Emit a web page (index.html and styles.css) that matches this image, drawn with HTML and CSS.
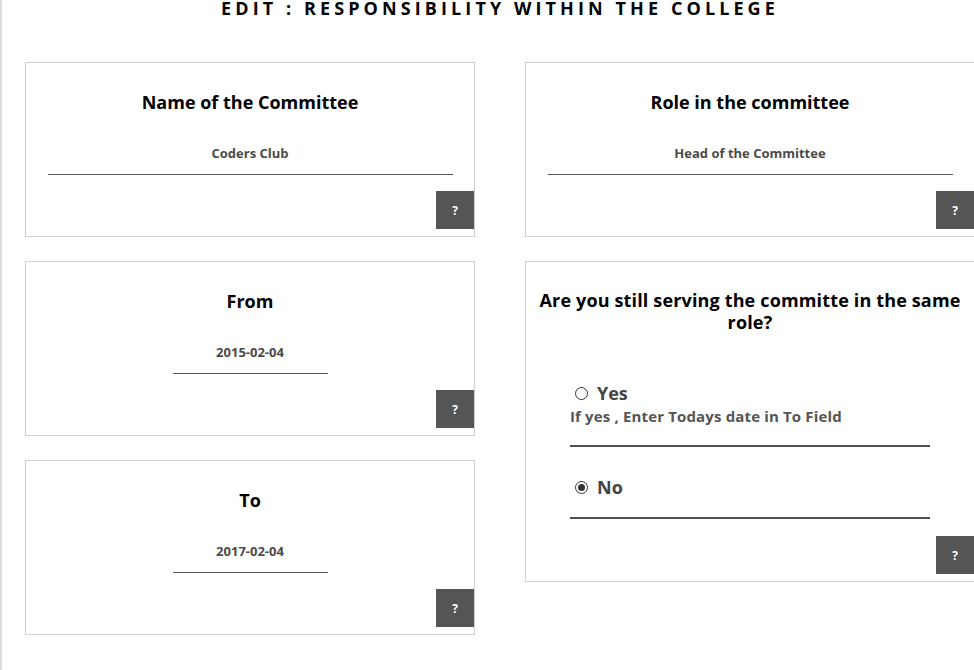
FILE: index.html
```html
<!DOCTYPE html>
<html lang="en">
<head>
<meta charset="utf-8">
<title>Edit : Responsibility within the college</title>
<link rel="stylesheet" href="styles.css">
</head>
<body>
<div class="page">
  <h1 class="page-title">EDIT : RESPONSIBILITY WITHIN THE COLLEGE</h1>
  <div class="grid">
    <div class="col">
      <div class="card">
        <div class="card-label">Name of the Committee</div>
        <div class="field field-wide">Coders Club</div>
        <button class="help">?</button>
      </div>
      <div class="card">
        <div class="card-label">From</div>
        <div class="field field-short">2015-02-04</div>
        <button class="help">?</button>
      </div>
      <div class="card">
        <div class="card-label">To</div>
        <div class="field field-short">2017-02-04</div>
        <button class="help">?</button>
      </div>
    </div>
    <div class="col">
      <div class="card">
        <div class="card-label">Role in the committee</div>
        <div class="field field-wide">Head of the Committee</div>
        <button class="help">?</button>
      </div>
      <div class="card card-tall">
        <div class="card-label card-question">Are you still serving the committe in the same role?</div>
        <div class="options">
          <div class="option">
            <div class="radio-row"><span class="radio"></span><span class="radio-text">Yes</span></div>
            <div class="hint">If yes , Enter Todays date in To Field</div>
          </div>
          <div class="option option-no">
            <div class="radio-row"><span class="radio radio-checked"></span><span class="radio-text">No</span></div>
          </div>
        </div>
        <button class="help">?</button>
      </div>
    </div>
  </div>
</div>
</body>
</html>
```
FILE: styles.css
```css
html, body {
  margin: 0;
  padding: 0;
  background: #fff;
  overflow: hidden;
}
body {
  font-family: "Open Sans", "Noto Sans", sans-serif;
  color: #000;
}
.page {
  border-left: 2px solid #dcdcdc;
  min-height: 670px;
  width: 975px;
  box-sizing: border-box;
}
.page-title {
  margin: 0 0 0 23px;
  padding-top: 0;
  width: 950px;
  text-align: center;
  font-size: 18px;
  line-height: 17px;
  font-weight: 700;
  letter-spacing: 4.1px;
  height: 62px;
}
.grid {
  margin-left: 23px;
  display: grid;
  grid-template-columns: 450px 450px;
  column-gap: 50px;
  align-items: start;
}
.col {
  display: flex;
  flex-direction: column;
  gap: 24px;
}
.card {
  box-sizing: border-box;
  height: 175px;
  border: 1px solid #cfcfcf;
  display: flex;
  flex-direction: column;
  align-items: center;
}
.card-tall {
  height: 321px;
}
.card-label {
  margin-top: 27px;
  font-size: 18px;
  line-height: 24px;
  font-weight: 700;
  text-align: center;
}
.card-question {
  line-height: 22px;
  padding: 0 6px;
  letter-spacing: 0.15px;
}
.field {
  margin-top: 28px;
  box-sizing: border-box;
  padding: 2px 0 12px;
  font-size: 13px;
  line-height: 18px;
  font-weight: 700;
  color: #4a4a4a;
  text-align: center;
  border-bottom: 1px solid #555;
}
.field-wide { width: 405px; }
.field-short { width: 155px; }
.help {
  margin-top: auto;
  margin-bottom: 7px;
  align-self: flex-end;
  width: 38px;
  height: 38px;
  border: 0;
  padding: 0;
  background: #555;
  color: #fff;
  font-family: "Open Sans", sans-serif;
  font-size: 12px;
  font-weight: 700;
}
.options {
  width: 360px;
  margin-top: 49px;
}
.option {
  border-bottom: 2px solid #505050;
  padding-bottom: 19px;
}
.option-no {
  margin-top: 29px;
  padding-bottom: 19px;
}
.radio-row {
  display: flex;
  align-items: center;
  padding-left: 5px;
  height: 22px;
}
.radio {
  box-sizing: border-box;
  width: 13px;
  height: 13px;
  border: 1px solid #333;
  border-radius: 50%;
  margin-right: 9px;
  display: flex;
  align-items: center;
  justify-content: center;
}
.radio-checked::after {
  content: "";
  width: 7px;
  height: 7px;
  border-radius: 50%;
  background: #333;
}
.radio-text {
  font-size: 18px;
  font-weight: 700;
  color: #444;
}
.hint {
  font-size: 15px;
  line-height: 20px;
  font-weight: 700;
  color: #555;
  margin-top: 2px;
  letter-spacing: 0.15px;
}
```
